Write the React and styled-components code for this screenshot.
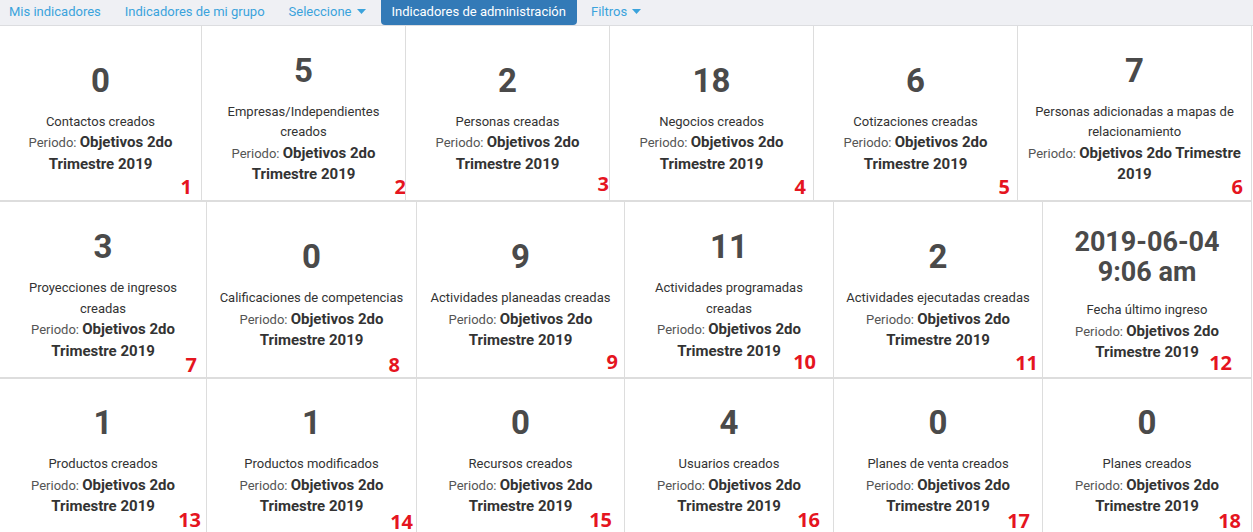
import React from "react";
import styled, { createGlobalStyle } from "styled-components";

const GlobalStyle = createGlobalStyle`
  html, body {
    margin: 0;
    padding: 0;
    background: #fff;
    font-family: Roboto, "Liberation Sans", sans-serif;
  }
  * {
    box-sizing: border-box;
  }
`;

const tabs = [
  { label: "Mis indicadores" },
  { label: "Indicadores de mi grupo" },
  { label: "Seleccione", caret: true },
  { label: "Indicadores de administración", active: true },
  { label: "Filtros", caret: true },
];

const period = "Objetivos 2do Trimestre 2019";

// height includes the row borders
const rows = [
  {
    cols: "201px 204px 204px 204px 204px 1fr",
    height: 175,
    items: [
      { value: "0", label: "Contactos creados", badge: [9, 3] },
      { value: "5", label: "Empresas/Independientes creados", badge: [-1, 3] },
      { value: "2", label: "Personas creadas", badge: [0, 6] },
      { value: "18", label: "Negocios creados", badge: [7, 3] },
      { value: "6", label: "Cotizaciones creadas", badge: [7, 3] },
      { value: "7", label: "Personas adicionadas a mapas de relacionamiento", badge: [8, 3] },
    ],
  },
  {
    cols: "206px 210px 208px 209px 209px 1fr",
    height: 177,
    items: [
      { value: "3", label: "Proyecciones de ingresos creadas", badge: [9, 2] },
      { value: "0", label: "Calificaciones de competencias", badge: [16, 2] },
      { value: "9", label: "Actividades planeadas creadas", badge: [6, 5] },
      { value: "11", label: "Actividades programadas creadas", badge: [17, 5] },
      { value: "2", label: "Actividades ejecutadas creadas", badge: [4, 4] },
      { value: "2019-06-04 9:06 am", label: "Fecha último ingreso", small: true, badge: [19, 4] },
    ],
  },
  {
    cols: "206px 210px 208px 209px 209px 1fr",
    height: 155,
    items: [
      { value: "1", label: "Productos creados", badge: [5, 2] },
      { value: "1", label: "Productos modificados", badge: [3, 0] },
      { value: "0", label: "Recursos creados", badge: [12, 2] },
      { value: "4", label: "Usuarios creados", badge: [13, 2] },
      { value: "0", label: "Planes de venta creados", badge: [12, 1] },
      { value: "0", label: "Planes creados", badge: [10, 1] },
    ],
  },
];

const Caret = () => (
  <svg width="9" height="5" viewBox="0 0 9 5" style={{ marginLeft: 5 }}>
    <path d="M0 0h9L4.5 5z" fill="currentColor" />
  </svg>
);

export default function App() {
  let n = 0;
  return (
    <>
      <GlobalStyle />
      <Page>
        <Tabs>
          {tabs.map((t) => (
            <Tab key={t.label} $active={t.active}>
              {t.label}
              {t.caret && <Caret />}
            </Tab>
          ))}
        </Tabs>
        <Board>
          {rows.map((row, ri) => (
            <Row key={ri} $cols={row.cols} $height={row.height}>
              {row.items.map((item) => {
                n += 1;
                return (
                  <Cell key={n}>
                    <Value $small={item.small}>
                      {item.small ? (
                        <>
                          2019-06-04
                          <br />
                          9:06 am
                        </>
                      ) : (
                        item.value
                      )}
                    </Value>
                    <Label>{item.label}</Label>
                    <Period>
                      Periodo: <b>{period}</b>
                    </Period>
                    <Badge $right={item.badge[0]} $bottom={item.badge[1]}>
                      {n}
                    </Badge>
                  </Cell>
                );
              })}
            </Row>
          ))}
        </Board>
      </Page>
    </>
  );
}

const Page = styled.div`
  width: 1253px;
  overflow: hidden;
`;

const Tabs = styled.nav`
  display: flex;
  height: 26px;
  background: #eff0f4;
  border-bottom: 1px solid #dcdde0;
`;

const Tab = styled.div`
  display: flex;
  align-items: center;
  height: 25px;
  padding: 0 12px 3px;
  font-size: 13px;
  color: ${(p) => (p.$active ? "#ffffff" : "#3ba3dc")};
  background: ${(p) => (p.$active ? "#337ab7" : "transparent")};
  border-radius: 0 0 4px 4px;
  white-space: nowrap;
  ${(p) => p.$active && "padding: 0 11px 3px; margin: 0 2px 0 3px;"}

  &:first-child {
    padding-left: 9px;
  }
`;

const Board = styled.div`
  width: 1252px;
  border-right: 1px solid #dddddd;
`;

const Row = styled.div`
  display: grid;
  grid-template-columns: ${(p) => p.$cols};
  min-height: ${(p) => p.$height}px;
  border-bottom: 1px solid #dddddd;

  & + & {
    border-top: 1px solid #dddddd;
  }
`;

const Cell = styled.div`
  position: relative;
  display: flex;
  flex-direction: column;
  justify-content: center;
  align-items: center;
  padding: 12px 6px 0;
  text-align: center;

  & + & {
    border-left: 1px solid #dddddd;
  }
`;

const Value = styled.div`
  font-size: ${(p) => (p.$small ? 27 : 33)}px;
  line-height: ${(p) => (p.$small ? 30 : 36)}px;
  font-weight: 700;
  color: #4a4a4a;
  margin-bottom: 13px;
`;

const Label = styled.div`
  font-size: 13px;
  line-height: 20.5px;
  color: #333333;
`;

const Period = styled.div`
  font-size: 13px;
  line-height: 20.5px;
  color: #555555;

  b {
    font-size: 15px;
    font-weight: 700;
    color: #333333;
  }
`;

const Badge = styled.span`
  position: absolute;
  right: ${(p) => p.$right}px;
  bottom: ${(p) => p.$bottom}px;
  font-family: "Open Sans", "DejaVu Sans", sans-serif;
  font-size: 20px;
  line-height: 20px;
  font-weight: 700;
  color: #e5151f;
`;
